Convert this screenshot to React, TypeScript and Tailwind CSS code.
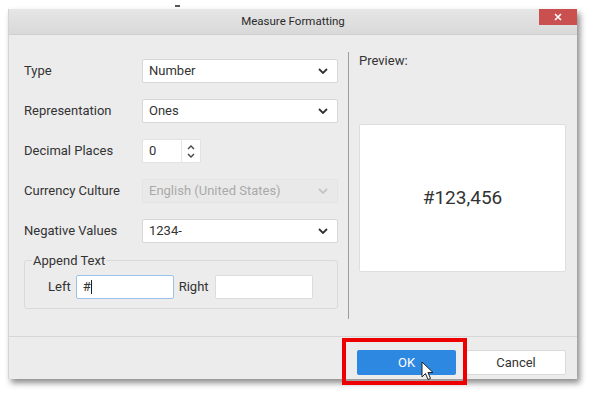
import React from "react";

const font = { fontFamily: "Roboto, 'Noto Sans', sans-serif" };

function Chevron({ muted }: { muted?: boolean }) {
  return (
    <svg width="10" height="6" viewBox="0 0 10 6" className="shrink-0">
      <polyline
        points="1,1 5,5 9,1"
        fill="none"
        stroke={muted ? "#c4c4c4" : "#333"}
        strokeWidth="1.8"
      />
    </svg>
  );
}

function Select({ value, disabled }: { value: string; disabled?: boolean }) {
  return (
    <div
      className={
        "w-[196px] h-[24px] rounded-[2px] border flex items-center justify-between pl-[6px] pr-[9px] " +
        (disabled ? "bg-[#e9e9e9] border-[#e4e4e4] text-[#a9a9a9]" : "bg-white border-[#d7d7d7] text-[#333]")
      }
    >
      <span>{value}</span>
      <Chevron muted={disabled} />
    </div>
  );
}

function Row({ label, children }: { label: string; children: React.ReactNode }) {
  return (
    <div className="flex items-center h-[24px]">
      <div className="w-[118px] text-[#333]">{label}</div>
      {children}
    </div>
  );
}

export default function App() {
  const rows = [
    { label: "Type", value: "Number" },
    { label: "Representation", value: "Ones" },
  ];
  return (
    <div className="w-[590px] h-[394px] bg-white relative overflow-hidden text-[13px]" style={font}>
      <div className="absolute left-[175px] top-[5px] w-[5px] h-[2px] bg-[#555]" />
      <div className="ml-[8px] mt-[9px] w-[569px] h-[370px] flex flex-col bg-[#ececec] shadow-[3px_4px_6px_rgba(0,0,0,0.45)] border-l border-[#d4d4d4]">
        {/* title bar */}
        <div className="h-[26px] shrink-0 flex items-center justify-center relative bg-gradient-to-b from-[#e6e6e6] to-[#d9d9d9] border-b border-[#cfcfcf]">
          <span className="text-[11.5px] text-[#2a2a2a]">Measure Formatting</span>
          <div className="absolute right-0 top-0 w-[38px] h-[16px] bg-[#c9504f] flex items-center justify-center">
            <svg width="8" height="8" viewBox="0 0 8 8">
              <path d="M1 1 L7 7 M7 1 L1 7" stroke="white" strokeWidth="1.6" />
            </svg>
          </div>
        </div>

        {/* body */}
        <div className="h-[302px] shrink-0 flex border-b border-[#d6d6d6]">
          <div className="w-[339px] shrink-0 pl-[15px] pr-[10px] pt-[24px] flex flex-col">
            <div className="flex flex-col gap-[16px]">
              {rows.map((r) => (
                <Row key={r.label} label={r.label}>
                  <Select value={r.value} />
                </Row>
              ))}
              <Row label="Decimal Places">
                <div className="w-[59px] h-[24px] bg-white border border-[#e2e2e2] rounded-[2px] flex">
                  <div className="flex-1 pl-[6px] flex items-center text-[#333]">0</div>
                  <div className="w-[19px] border-l border-[#e6e6e6] flex flex-col items-center justify-center gap-[3px]">
                    <svg width="8" height="5" viewBox="0 0 8 5">
                      <polyline points="1,4 4,1 7,4" fill="none" stroke="#444" strokeWidth="1.4" />
                    </svg>
                    <svg width="8" height="5" viewBox="0 0 8 5">
                      <polyline points="1,1 4,4 7,1" fill="none" stroke="#444" strokeWidth="1.4" />
                    </svg>
                  </div>
                </div>
              </Row>
              <Row label="Currency Culture">
                <Select value="English (United States)" disabled />
              </Row>
              <Row label="Negative Values">
                <Select value="1234-" />
              </Row>
            </div>
            <fieldset className="mt-[10px] w-[314px] h-[56px] border border-[#dadada] rounded-[3px] px-[7px] pt-[7px]">
              <legend className="px-[1px] text-[#333] leading-[15px]">Append Text</legend>
              <div className="ml-[16px] flex items-center text-[#333]">
                <span>Left</span>
                <div className="ml-[5px] w-[98px] h-[24px] bg-white border border-[#9cc1ea] rounded-[2px] pl-[6px] flex items-center">
                  #<span className="w-px h-[14px] bg-[#222]" />
                </div>
                <span className="ml-[5px]">Right</span>
                <div className="ml-[6px] w-[98px] h-[24px] bg-white border border-[#dcdcdc] rounded-[2px]" />
              </div>
            </fieldset>
          </div>
          <div className="w-px bg-[#9c9c9c] my-[17px]" />
          <div className="flex-1 pl-[10px] pr-[11px] pt-[18px] flex flex-col">
            <div className="text-[#333] leading-[15px]">Preview:</div>
            <div className="mt-[56px] h-[148px] bg-white border border-[#dedede] rounded-[2px] flex items-center justify-center">
              <span className="text-[19px] text-[#333]">#123,456</span>
            </div>
          </div>
        </div>

        {/* footer */}
        <div className="flex-1 flex items-start justify-end pt-[13px] pr-[11px] gap-[10px]">
          <div className="relative w-[99px] h-[25px] bg-[#2c88e0] rounded-[2px] text-white flex items-center justify-center">
            OK
            <div className="absolute -left-[15px] -top-[12px] -right-[11px] -bottom-[10px] border-[4px] border-[#ee0000]" />
            <svg className="absolute left-[64px] top-[11px]" width="13" height="20" viewBox="0 0 13 20">
              <path d="M1 1 L1 16 L4.5 12.5 L7 18.5 L9.5 17.5 L7 11.5 L12 11.5 Z" fill="white" stroke="#222" strokeWidth="1" strokeLinejoin="round" />
            </svg>
          </div>
          <div className="w-[100px] h-[25px] bg-white border border-[#dadada] rounded-[2px] text-[#333] flex items-center justify-center">
            Cancel
          </div>
        </div>
      </div>
    </div>
  );
}
